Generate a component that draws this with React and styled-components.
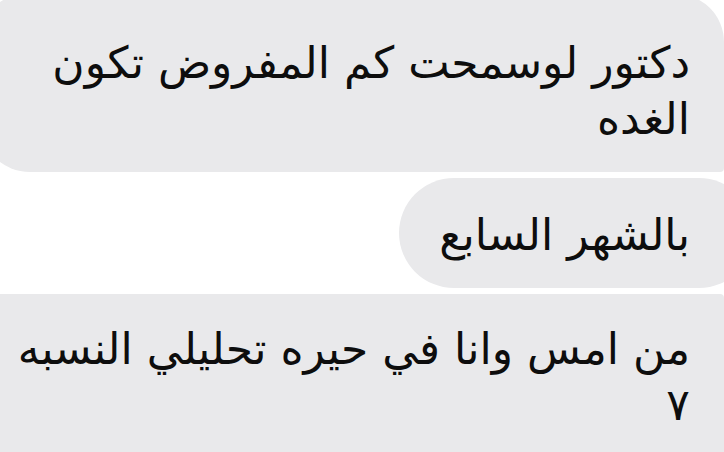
import React from 'react'
import styled, { createGlobalStyle } from 'styled-components'

const GlobalStyle = createGlobalStyle`
  html, body {
    margin: 0;
    padding: 0;
    background: #ffffff;
  }
  body {
    width: 724px;
    height: 452px;
    overflow: hidden;
  }
`

const Thread = styled.div`
  direction: rtl;
  display: flex;
  flex-direction: column;
  align-items: flex-start;
  gap: 6px;
  width: 724px;
  height: 452px;
  overflow: hidden;
  font-family: 'DejaVu Sans', 'Noto Sans', sans-serif;
`

const Bubble = styled.div`
  box-sizing: border-box;
  background: #e9e9eb;
  color: #0d0d0d;
  font-size: 44px;
  line-height: 56px;
  padding: ${props => props.pad};
  margin-top: ${props => props.top || 0}px;
  margin-right: ${props => props.right || 0}px;
  margin-left: ${props => props.left || 0}px;
  border-radius: ${props => props.radius};
  width: ${props => props.width || 'auto'};
  flex-shrink: 0;
`

export default function App() {
  return (
    <>
      <GlobalStyle />
      <Thread>
        <Bubble
          top={-6}
          left={-20}
          width="744px"
          radius="46px 48px 4px 50px"
          pad="41px 34px 25px 30px"
        >
          دكتور لوسمحت كم المفروض تكون الغده
        </Bubble>
        <Bubble
          right={-30}
          radius="55px"
          pad="29px 64px 25px 40px"
        >
          بالشهر السابع
        </Bubble>
        <Bubble
          left={-20}
          width="744px"
          radius="4px 4px 0 46px"
          pad="27px 34px 60px 30px"
        >
          من امس وانا في حيره تحليلي النسبه ٧
        </Bubble>
      </Thread>
    </>
  )
}
